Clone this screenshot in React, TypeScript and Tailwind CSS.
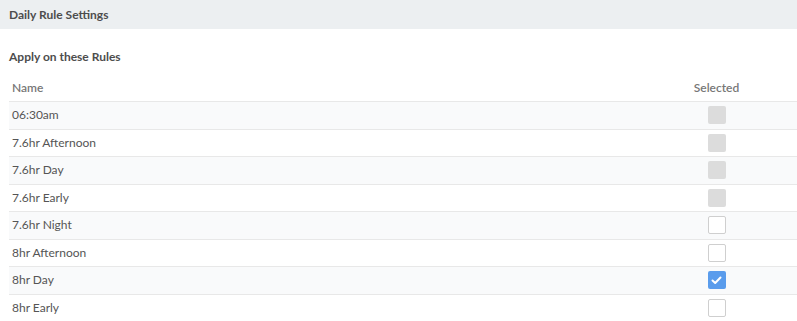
const rules = [
  { name: "06:30am", state: "disabled" },
  { name: "7.6hr Afternoon", state: "disabled" },
  { name: "7.6hr Day", state: "disabled" },
  { name: "7.6hr Early", state: "disabled" },
  { name: "7.6hr Night", state: "off" },
  { name: "8hr Afternoon", state: "off" },
  { name: "8hr Day", state: "on" },
  { name: "8hr Early", state: "off" },
];

function Box({ state }: { state: string }) {
  if (state === "disabled") {
    return <div className="w-[18px] h-[18px] rounded-[2px] bg-[#dcdcdc]" />;
  }
  if (state === "on") {
    return (
      <div className="w-[18px] h-[18px] rounded-[2px] bg-[#5a9cec] flex items-center justify-center">
        <svg width="11" height="9" viewBox="0 0 11 9" fill="none">
          <path d="M1.5 4.5 L4.2 7 L9.5 1.5" stroke="white" strokeWidth="2" strokeLinecap="round" strokeLinejoin="round" />
        </svg>
      </div>
    );
  }
  return <div className="w-[18px] h-[18px] rounded-[2px] border border-[#cfcfcf] bg-white" />;
}

export default function App() {
  return (
    <div className="w-[797px] h-[321px] bg-white overflow-hidden font-['Lato','Liberation_Sans',sans-serif] text-[#555]">
      <div className="h-[29px] bg-[#eceff1] flex items-center px-[9px]">
        <span className="text-[12px] font-bold text-[#4d4d4d]">Daily Rule Settings</span>
      </div>
      <div className="pl-[9px]">
        <div className="h-[30px] mt-[13px] flex items-center text-[12px] font-bold text-[#4d4d4d]">
          Apply on these Rules
        </div>
        <div className="h-[30px] flex items-end pb-[4px] text-[12px] font-semibold text-[#777] border-b border-[#e8e8e8]">
          <div className="flex-1 pl-[3px]">Name</div>
          <div className="w-[161px] text-center">Selected</div>
        </div>
        {rules.map((r, i) => (
          <div
            key={r.name}
            className={`h-[27.5px] flex items-center text-[12px] border-b border-[#e8e8e8] ${i % 2 === 0 ? "bg-[#f9fafb]" : "bg-white"}`}
          >
            <div className="flex-1 pl-[3px]">{r.name}</div>
            <div className="w-[161px] flex justify-center">
              <Box state={r.state} />
            </div>
          </div>
        ))}
      </div>
    </div>
  );
}
